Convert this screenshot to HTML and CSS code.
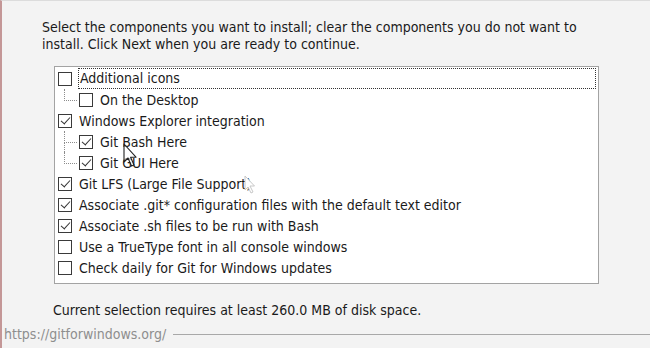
FILE: index.html
```html
<!DOCTYPE html>
<html lang="en">

<head>
    <meta charset="utf-8">
    <title>Git Setup - Select Components</title>
    <link rel="stylesheet" href="styles.css">
</head>

<body>
    <div class="page">
        <p class="intro">Select the components you want to install; clear the components you do not want to install. Click Next when you are ready to continue.</p>

        <div class="list">
            <div class="row">
                <span class="box"></span>
                <span class="label focus">Additional icons</span>
            </div>
            <div class="row child last">
                <span class="branch"></span>
                <span class="box"></span>
                <span class="label">On the Desktop</span>
            </div>
            <div class="row">
                <span class="box checked"></span>
                <span class="label">Windows Explorer integration</span>
            </div>
            <div class="row child">
                <span class="branch"></span>
                <span class="box checked"></span>
                <span class="label">Git Bash Here</span>
            </div>
            <div class="row child last">
                <span class="branch"></span>
                <span class="box checked"></span>
                <span class="label">Git GUI Here</span>
            </div>
            <div class="row">
                <span class="box checked"></span>
                <span class="label">Git LFS (Large File Support)</span>
            </div>
            <div class="row">
                <span class="box checked"></span>
                <span class="label">Associate .git* configuration files with the default text editor</span>
            </div>
            <div class="row">
                <span class="box checked"></span>
                <span class="label">Associate .sh files to be run with Bash</span>
            </div>
            <div class="row">
                <span class="box"></span>
                <span class="label">Use a TrueType font in all console windows</span>
            </div>
            <div class="row">
                <span class="box"></span>
                <span class="label">Check daily for Git for Windows updates</span>
            </div>
        </div>

        <p class="space">Current selection requires at least 260.0 MB of disk space.</p>
    </div>

    <div class="footer">
        <span class="url">https://gitforwindows.org/</span>
        <span class="rule"></span>
    </div>

    <svg class="cursor" width="18" height="26" viewBox="0 0 18 26">
        <path d="M1 1 L1 19 L5 15 L8.5 23 L11 22 L7.6 14.2 L13 14.2 Z" fill="#fff" fill-opacity="0.6" stroke="#222" stroke-width="1.1" stroke-linejoin="round" />
    </svg>
    <svg class="cursor ghost" width="14" height="20" viewBox="0 0 14 20">
        <path d="M1 1 L1 15 L4 12 L7 18 L9 17 L6 11 L10.5 11 Z" fill="#fff" stroke="#c8c8c8" stroke-width="1" stroke-linejoin="round" />
    </svg>
</body>

</html>
```

FILE: styles.css
```css
:root {
    --panel-bg: #f3f3f3;
    --text: #1a1a1a;
    --box-border: #3a3a3a;
    --dots: #8c8c8c;
}

body {
    margin: 0;
    height: 348px;
    overflow: hidden;
    position: relative;
    background: var(--panel-bg);
    border-top: 1px solid #dcdcdc;
    border-left: 2px solid #c49797;
    box-sizing: border-box;
    font-family: 'DejaVu Sans Condensed', 'DejaVu Sans', sans-serif;
    font-size: 14px;
    color: var(--text);
}

.page {
    padding: 0 0 0 40px;
}

.intro {
    margin: 0;
    padding-top: 18px;
    width: 560px;
    line-height: 16.5px;
}

.list {
    margin: 14px 0 0 12px;
    width: 545px;
    height: 218px;
    box-sizing: border-box;
    border: 1px solid #a3a3a3;
    background: #fff;
    padding: 1px 0 0 3px;
}

.row {
    display: flex;
    align-items: center;
    height: 21px;
}

.box {
    flex: none;
    width: 14px;
    height: 14px;
    box-sizing: border-box;
    border: 1px solid var(--box-border);
    background: #fff;
    position: relative;
}

.box.checked::after {
    content: "";
    position: absolute;
    left: 3.5px;
    top: 0.5px;
    width: 4px;
    height: 8px;
    border-right: 1.2px solid #333;
    border-bottom: 1.2px solid #333;
    transform: rotate(42deg);
}

.label {
    margin-left: 7px;
    white-space: nowrap;
    padding: 1px 0;
}

.label.focus {
    margin-left: 7px;
    flex: 1;
    margin-right: 3px;
    padding: 1px 0 2px 0;
    outline: 1px dotted #333;
    outline-offset: 0;
    text-indent: 1px;
}

.branch {
    flex: none;
    align-self: stretch;
    width: 13px;
    margin-left: 6px;
    margin-right: 2px;
    display: flex;
    flex-direction: column;
}

.branch::before {
    content: "";
    height: 11px;
    border-left: 1px dotted var(--dots);
    border-bottom: 1px dotted var(--dots);
}

.branch::after {
    content: "";
    flex: 1;
    border-left: 1px dotted var(--dots);
}

.row.last .branch::after {
    border-left: none;
}

.space {
    margin: 18px 0 0 11px;
}

.footer {
    display: flex;
    align-items: center;
    gap: 7px;
    margin-top: 8px;
    padding-left: 2px;
}

.url {
    color: #8e8e8e;
    font-size: 14px;
}

.rule {
    flex: 1;
    border-top: 1px solid #a8a8a8;
}

.cursor {
    position: absolute;
    left: 121px;
    top: 142px;
}

.cursor.ghost {
    left: 242px;
    top: 174px;
}
```
